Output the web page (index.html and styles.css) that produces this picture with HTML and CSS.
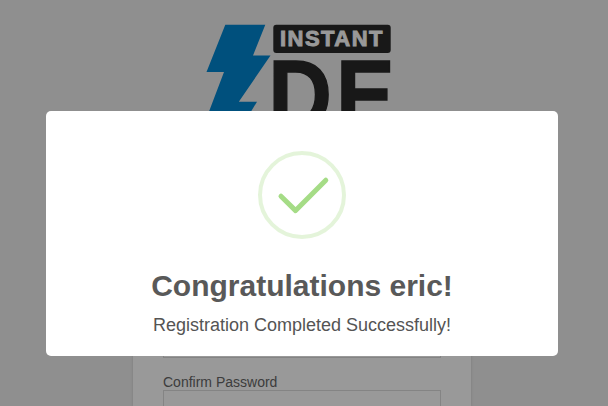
FILE: index.html
```
<!DOCTYPE html>
<html lang="en">
<head>
    <meta charset="UTF-8">
    <meta name="viewport" content="width=device-width, initial-scale=1.0">
    <title>Register</title>
    <link rel="stylesheet" href="styles.css">
</head>
<body>

    <div class="page">
        <!-- Logo -->
        <svg class="logo" width="196" height="110" viewBox="200 20 196 110">
            <path class="bolt" d="M225.3 24.7H265.3L253 55.5H270.5L238.8 101.7H257L240 130H202L224 72H206.5Z"/>
            <rect class="ink" x="273.3" y="24.7" width="117.4" height="28.3" rx="3"/>
            <text class="logo-small" x="280" y="46.3" textLength="102.5" lengthAdjust="spacing">INSTANT</text>
            <text class="logo-big" transform="translate(268.2 129) scale(.89 1)">D</text>
            <text class="logo-big" transform="translate(336 129) scale(.89 1)">E</text>
        </svg>

        <!-- Registration Form -->
        <form class="register-form">
            <input type="text" id="email">
            <input type="text" id="username">
            <input type="password" id="password">
            <label for="confirm">Confirm Password</label>
            <input type="password" id="confirm">
        </form>
    </div>

    <!-- Success Popup -->
    <div class="overlay">
        <div class="popup">
            <div class="success-icon">
                <svg width="80" height="80" viewBox="0 0 80 80">
                    <path d="M19 41.2L33.6 55.6L63.8 25.2"/>
                </svg>
            </div>
            <h2>Congratulations eric!</h2>
            <p>Registration Completed Successfully!</p>
        </div>
    </div>

</body>
</html>
```
FILE: styles.css
```
* {
    box-sizing: border-box;
}

body {
    font-family: "Liberation Sans", Arial, sans-serif;
    background-color: #eee;
    margin: 0;
    height: 406px;
    overflow: hidden;
}

.page {
    width: 604px;
    height: 406px;
    padding-top: 20px;
    display: flex;
    flex-direction: column;
    align-items: center;
    overflow: hidden;
}

.logo {
    display: block;
    flex-shrink: 0;
    margin-right: 8px;
}

.bolt {
    fill: #0085d0;
}

.ink {
    fill: #282828;
}

.logo-small {
    font-size: 22px;
    font-weight: bold;
    fill: #fff;
    stroke: #fff;
    stroke-width: 0.9;
}

.logo-big {
    font-size: 99px;
    font-weight: bold;
    fill: #282828;
    stroke: #282828;
    stroke-width: 1.4;
}

.register-form {
    flex-shrink: 0;
    width: 338px;
    height: 268px;
    margin-top: 8px;
    padding: 51px 30px 0;
    overflow: hidden;
    background-color: #fff;
    box-shadow: 0 1px 3px rgba(0, 0, 0, 0.13);
}

.register-form label {
    display: block;
    margin-top: -16px;
    font-size: 14px;
    line-height: 16px;
    color: #666;
}

.register-form input {
    display: block;
    width: 278px;
    height: 35px;
    margin: 0 0 32px;
    border: 1px solid #ddd;
    background-color: #fff;
}

.register-form input:last-child {
    margin: 0;
}

.overlay {
    position: fixed;
    inset: 0;
    padding: 111px 50px 50px 46px;
    background-color: rgba(0, 0, 0, 0.4);
}

.popup {
    width: 512px;
    height: 245px;
    padding: 40px 20px 20px;
    border-radius: 5px;
    background-color: #fff;
    text-align: center;
}

.success-icon {
    width: 88px;
    height: 88px;
    margin: 0 auto 30px;
    border: 4px solid rgba(165, 220, 134, 0.3);
    border-radius: 50%;
}

.success-icon svg {
    display: block;
}

.success-icon path {
    fill: none;
    stroke: #a5dc86;
    stroke-width: 5;
    stroke-linecap: round;
    stroke-linejoin: round;
}

.popup h2 {
    margin: 0 0 12px;
    font-size: 30px;
    line-height: 34px;
    color: #595959;
}

.popup p {
    margin: 0;
    font-size: 18px;
    line-height: 20px;
    color: #545454;
}
```
